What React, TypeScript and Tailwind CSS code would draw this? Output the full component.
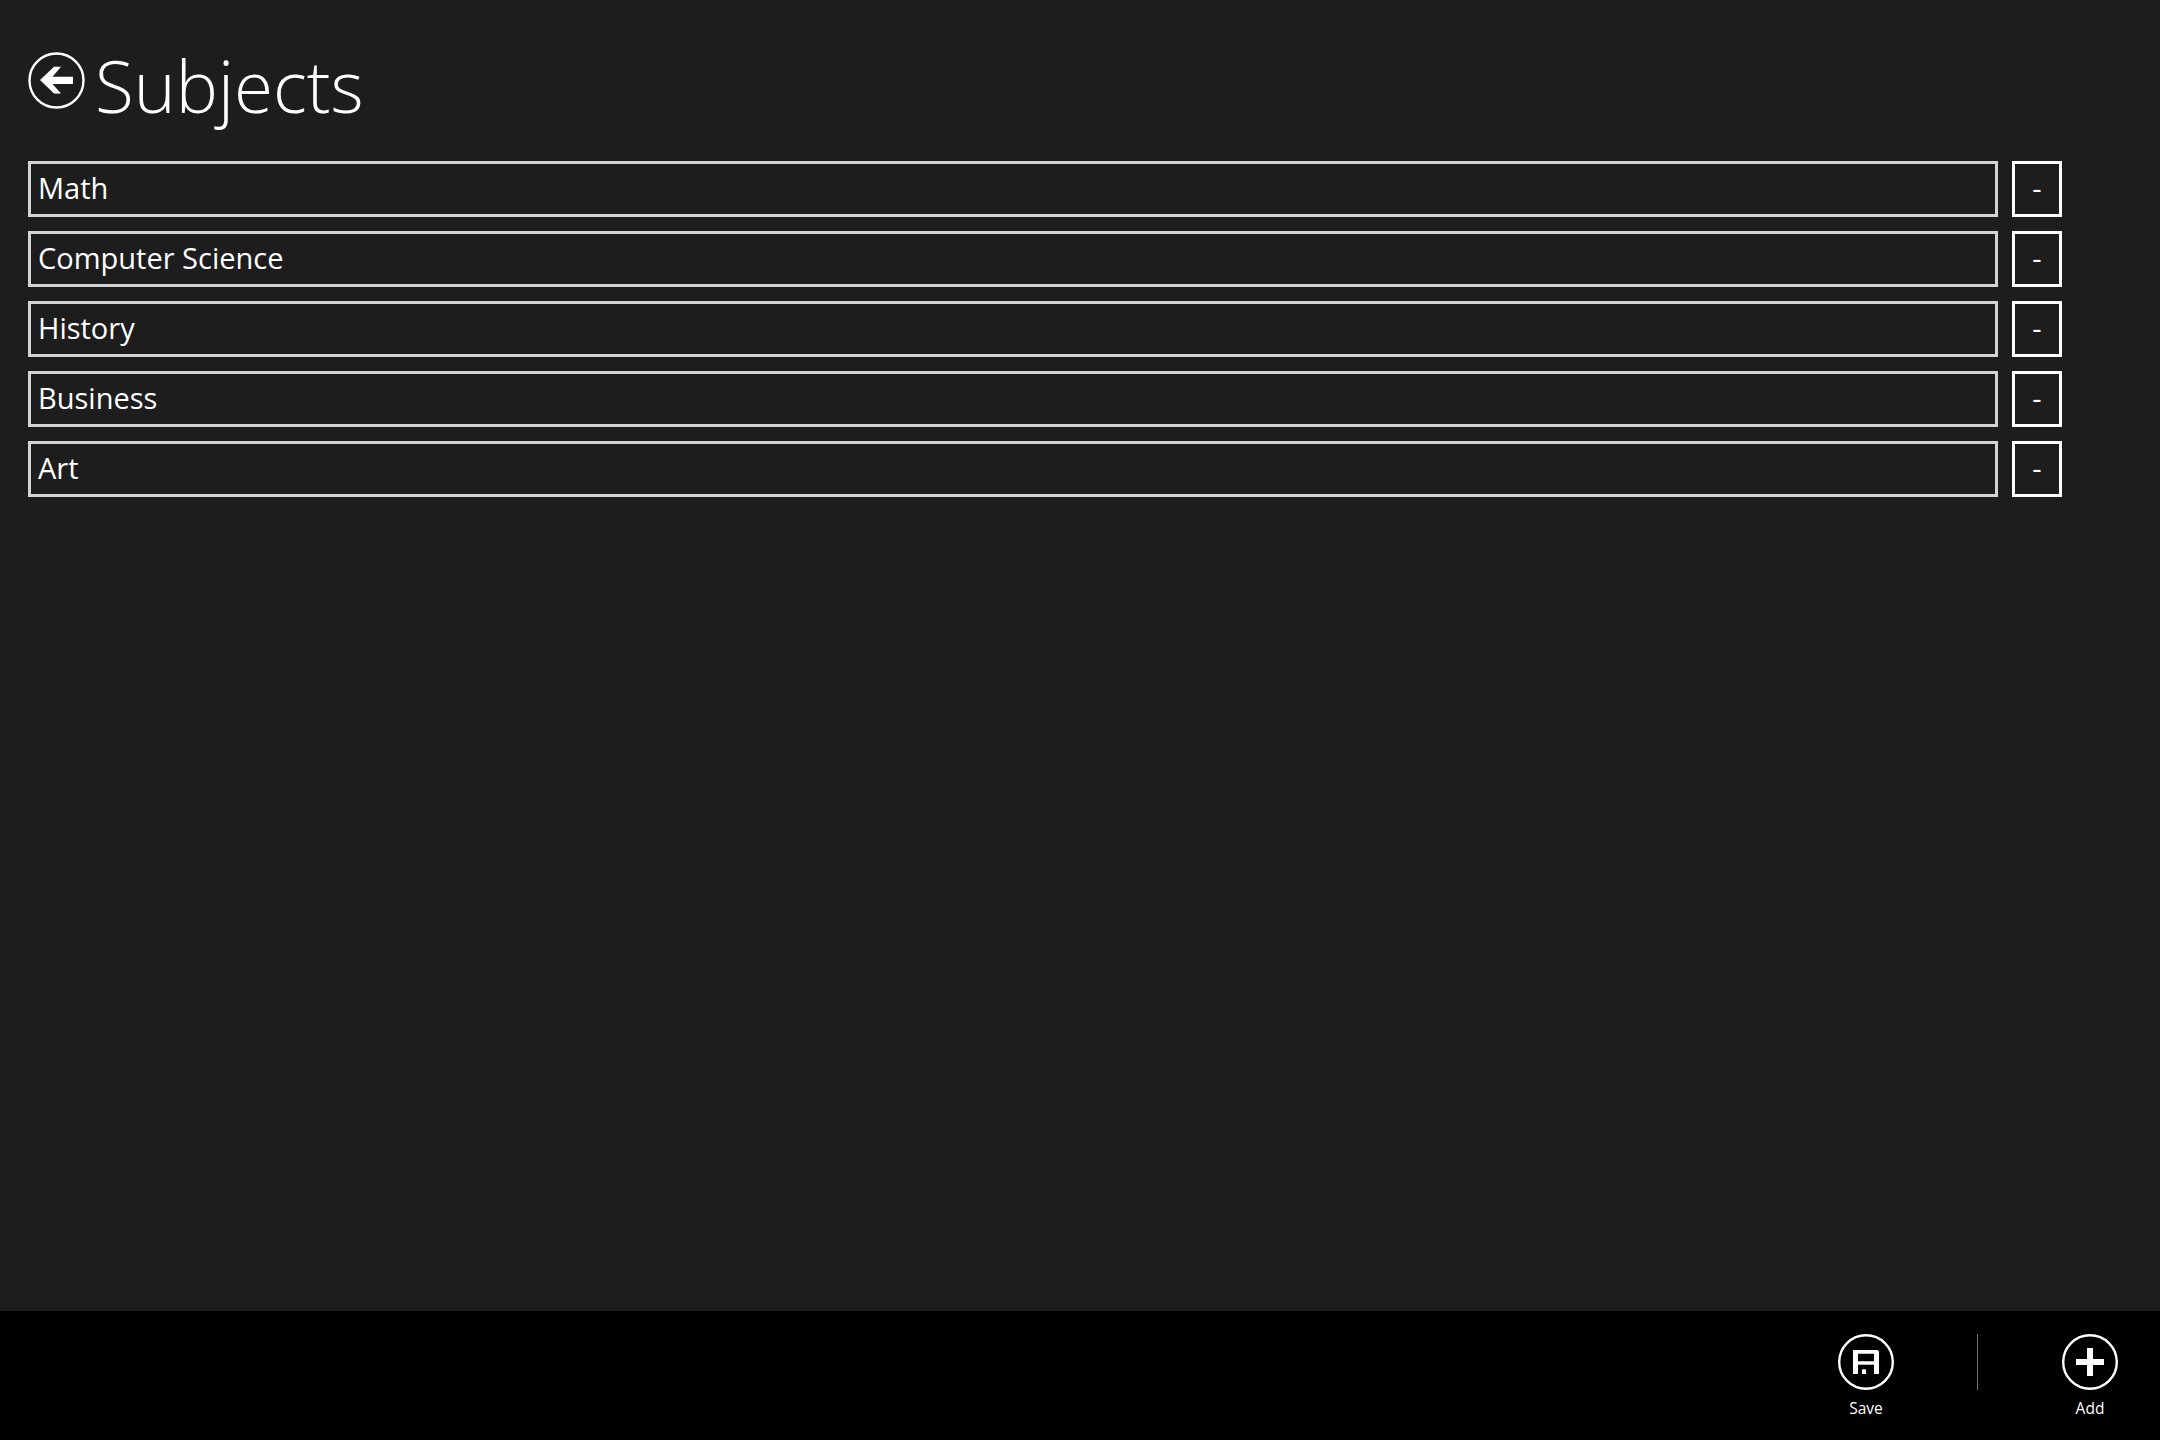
import React from "react";

const subjects = ["Math", "Computer Science", "History", "Business", "Art"];

const BackIcon = () => (
  <svg width="57" height="57" viewBox="0 0 57 57" className="shrink-0">
    <circle cx="28.5" cy="28.5" r="27" fill="none" stroke="white" strokeWidth="2.4" />
    <path d="M12 28 L26 14.7 H33 L24.5 24.8 H45 V32 H24.5 L33 41.5 H26 Z" fill="white" />
  </svg>
);

const SaveIcon = () => (
  <svg width="56" height="56" viewBox="0 0 56 56">
    <circle cx="28" cy="28" r="26.8" fill="none" stroke="white" strokeWidth="2.4" />
    <path
      fillRule="evenodd"
      d="M15 16 H39.5 L41 17.5 V40 H15 Z M20 19.7 V27.3 H36 V19.7 Z"
      fill="white"
    />
    <rect x="20" y="30.7" width="16" height="9.3" fill="black" />
    <rect x="24" y="35.3" width="4" height="4.7" fill="white" />
  </svg>
);

const AddIcon = () => (
  <svg width="56" height="56" viewBox="0 0 56 56">
    <circle cx="28" cy="28" r="26.8" fill="none" stroke="white" strokeWidth="2.4" />
    <path d="M25 14 H31 V25 H42 V31 H31 V42 H25 V31 H14 V25 H25 Z" fill="white" />
  </svg>
);

const AppBarButton = ({ label, children }: { label: string; children: React.ReactNode }) => (
  <div className="flex w-[100px] flex-col items-center">
    {children}
    <span className="mt-[7px] text-[15.5px] leading-[22px] text-white">{label}</span>
  </div>
);

export default function App() {
  return (
    <div className="flex h-[1440px] flex-col bg-[#1d1d1d] font-['Open_Sans','Liberation_Sans',sans-serif] text-white">
      {/* Header */}
      <div className="flex-1 pl-[28px]">
        <div className="flex h-[161px] items-start pt-[52px]">
          <BackIcon />
          <h1 className="ml-[10px] -mt-[15px] text-[71px] font-light leading-[98px]">Subjects</h1>
        </div>

        {/* Subject rows */}
        <div className="flex flex-col gap-[14px]">
          {subjects.map((subject) => (
            <div key={subject} className="flex gap-[14px]">
              <div className="flex h-[56px] w-[1970px] items-center border-[3px] border-[#d4d4d4] pb-[3px] pl-[7px] text-[29px]">
                {subject}
              </div>
              <button className="flex h-[56px] w-[50px] items-center justify-center border-[3px] border-white pb-[3px] text-[29px]">
                -
              </button>
            </div>
          ))}
        </div>
      </div>

      {/* App bar */}
      <div className="flex h-[129px] items-start justify-end bg-black pr-[20px] pt-[23px]">
        <AppBarButton label="Save">
          <SaveIcon />
        </AppBarButton>
        <div className="ml-[61px] mr-[62px] h-[56px] w-px bg-[#6f6f6f]" />
        <AppBarButton label="Add">
          <AddIcon />
        </AppBarButton>
      </div>
    </div>
  );
}
